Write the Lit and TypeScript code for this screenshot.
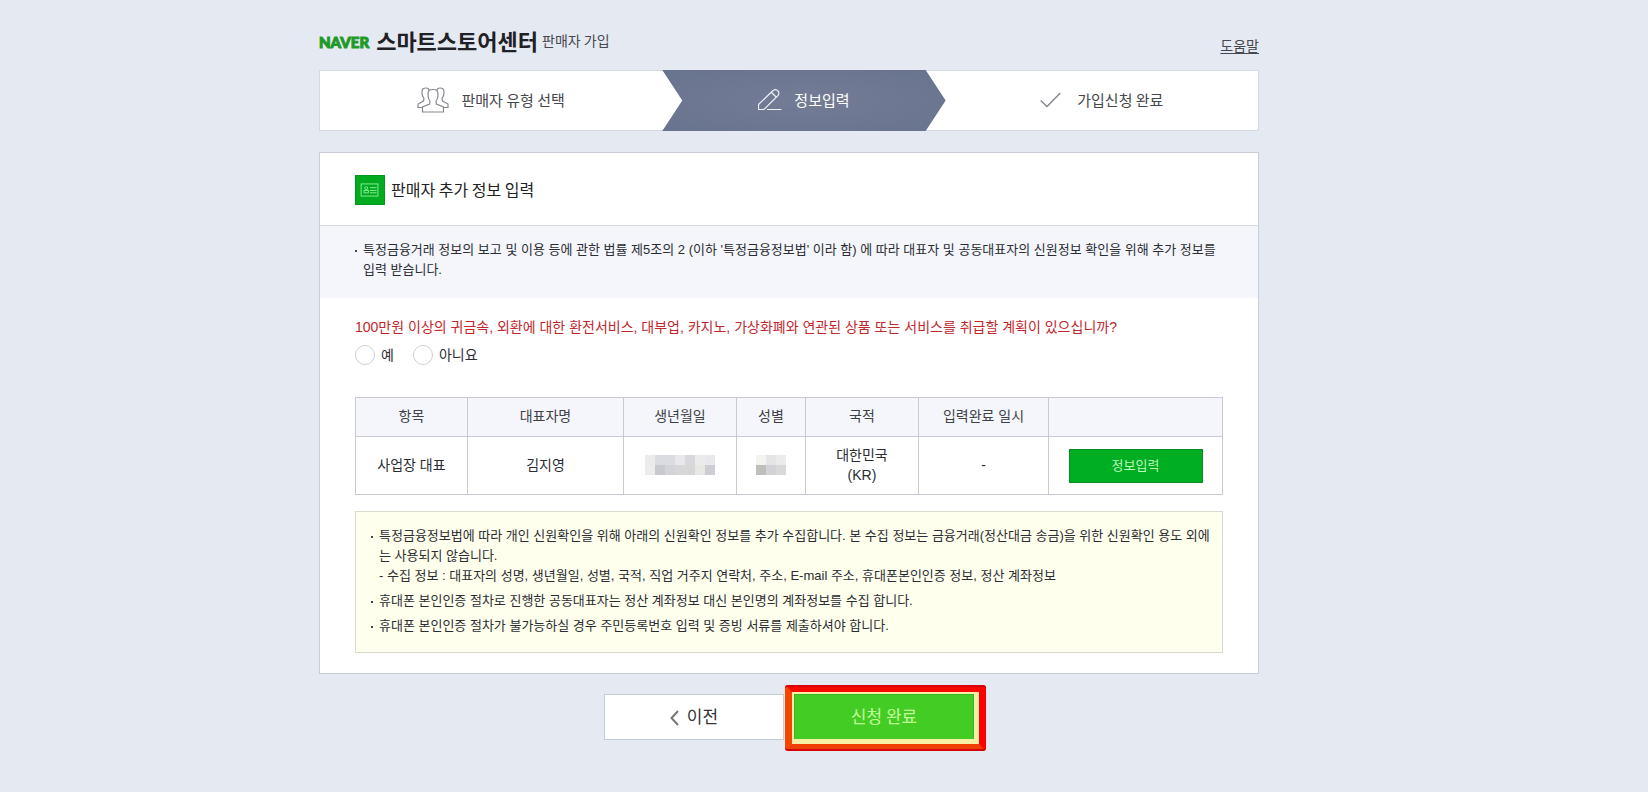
import { LitElement, html, css, svg } from "lit";
import { customElement, state } from "lit/decorators.js";
import { styleMap } from "lit/directives/style-map.js";

const peopleIcon = svg`<svg class="ico people" viewBox="0 0 32 26" width="32" height="26" aria-hidden="true">
  <path d="M12 3.500C11.800 1.800 11 1 9.500 1C6.500 0.800 5 2 5 5C4.800 7 5.500 9.500 7 11.500L6.500 14L1 17V20.500H5.500"/>
  <path d="M20 3.500C20.200 1.800 21 1 22.500 1C25.500 0.800 27 2 27 5C27.200 7 26.500 9.500 25 11.500L25.500 14L31 17V20.500H26.500"/>
  <path d="M16 2.500C12.500 2.300 10.800 4 11 7.500C10.800 10.500 11.500 12.500 13 14.500L12.600 17L5.500 20V25H26.500V20L19.400 17L19 14.500C20.500 12.500 21.200 10.500 21 7.500C21.200 4 19.500 2.300 16 2.500Z"/>
</svg>`;

const pencilIcon = svg`<svg class="ico pencil" viewBox="0 0 24 22" width="24" height="22" aria-hidden="true">
  <path d="M0.500 15.500L14.800 1.800C16.200 0.200 18.200 0.200 19.700 1.700C21.300 3.200 21.300 5.200 19.900 6.600L6 20.500H0.500Z"/>
  <path d="M13.300 3.200L18.400 8.200"/>
  <path d="M9 20.500H23.500"/>
</svg>`;

const checkIcon = svg`<svg class="ico check" viewBox="0 0 21 16" width="21" height="16" aria-hidden="true">
  <path d="M0.700 8.500L7 14.500L20.300 1"/>
</svg>`;

const cardIcon = svg`<svg class="card-ico" viewBox="0 0 30 30" width="30" height="30" aria-hidden="true">
  <rect x="5.500" y="8.500" width="18" height="13"/>
  <circle cx="11" cy="13" r="1.600"/>
  <path d="M8.500 18V15.500H13.500V18Z"/>
  <path d="M15 12.500H22M15 15.500H22M15 18H22"/>
</svg>`;

const birthMask = [
  ["#ebebeb", "#dbdbe3", "#dbdbe3", "#e9e9ed", "#d9d9dd", "#ebebeb", "#e9e9ed"],
  ["#ececec", "#c9c9d1", "#d3d3d9", "#d7d7d7", "#d7d7d7", "#e7e7e3", "#cdcdd3"],
];
const genderMask = [
  ["#f3f3ef", "#e5e5e5", "#ebebeb"],
  ["#bfbfbb", "#d3d3d7", "#d9d9d9"],
];

@customElement("pixel-mask")
class PixelMask extends LitElement {
  static properties = { rows: { attribute: false } };
  declare rows: string[][];
  static styles = css`
    :host { display: inline-block; vertical-align: middle; }
    .row { display: flex; }
    .cell { width: 10px; height: 10px; }
  `;
  render() {
    return html`${this.rows.map(
      (r) => html`<div class="row">${r.map((c) => html`<span class="cell" style=${styleMap({ background: c })}></span>`)}</div>`
    )}`;
  }
}

@customElement("app-root")
class AppRoot extends LitElement {
  @state() private answer = "";

  static styles = css`
    :host {
      display: block;
      min-height: 100vh;
      box-sizing: border-box;
      padding: 24px 70px 40px 0;
      background: #e5e9f1;
      color: #2b2d33;
      font-family: "Liberation Sans", "Noto Sans CJK KR", sans-serif;
      font-size: 13px;
      line-height: 20px;
    }
    * { box-sizing: border-box; }
    .wrap { max-width: 940px; margin: 0 auto; }
    .top { display: flex; justify-content: space-between; align-items: flex-end; height: 34px; padding-bottom: 2px; }
    .brand { display: flex; align-items: center; height: 32px; margin: 0; font-weight: 400; }
    .naver { padding-top: 4px; font: 900 15px/20px Lato, sans-serif; -webkit-text-stroke: 1px #1f9a28; color: #1f9a28; text-decoration: none; }
    .center { margin-left: 7px; font: 700 22px/32px "Noto Sans CJK KR", sans-serif; color: #1f2126; }
    .join { margin-left: 4px; font: 400 14px/32px "Noto Sans CJK KR", sans-serif; color: #45484f; }
    .help { color: #45484f; font-size: 14px; line-height: 20px; text-underline-offset: 2px; }

    .steps {
      display: grid;
      grid-template-columns: 343fr 284fr 313fr;
      height: 61px;
      margin: 12px 0 0;
      padding: 0;
      list-style: none;
      background: #fff;
      border: 1px solid #d3d8e1;
      font: 400 15px/22px "Noto Sans CJK KR", sans-serif;
      color: #45474d;
    }
    .step { display: flex; align-items: center; justify-content: center; gap: 12px; padding-bottom: 2px; }
    .step.on {
      margin: -1px 0;
      color: #fff;
      background: radial-gradient(ellipse at center, #737c95, #68738f);
      clip-path: polygon(0 0, calc(100% - 20px) 0, 100% 50%, calc(100% - 20px) 100%, 0 100%, 20px 50%);
    }
    .step:last-child { gap: 16px; }
    .ico { fill: none; stroke: #85888f; stroke-width: 1.2; }
    .pencil { stroke: #eef0f8; }
    .check { stroke: #85858f; stroke-width: 1.400; }

    .panel { margin-top: 21px; background: #fff; border: 1px solid #c8cdd6; }
    .head { display: flex; align-items: center; gap: 6px; height: 73px; padding: 2px 35px 0; border-bottom: 1px solid #d5d8e0; }
    .card-ico { background: #00ab1f; border: 1px solid #079322; fill: none; stroke: #8df09a; stroke-width: 1; }
    .head h2 { margin: 0; padding-bottom: 3px; font: 400 16px/24px "Noto Sans CJK KR", sans-serif; color: #222; }
    .notice { padding: 14px 35px 18px; background: #f4f6fb; }
    ul.dots { margin: 0; padding: 0; list-style: none; }
    .dots li { display: flex; gap: 6px; }
    .dots li::before { content: ""; flex: none; width: 2px; height: 2px; margin-top: 10px; background: #444; }
    .body { padding: 19px 35px 20px; }
    fieldset { margin: 0; padding: 0; border: 0; }
    legend { padding: 0; font-size: 14px; color: #c0272d; }
    .radios { display: flex; gap: 19px; margin-top: 8px; font-size: 14px; }
    .radio { display: flex; align-items: center; gap: 6px; }
    .radio input {
      appearance: none;
      width: 20px;
      height: 20px;
      margin: 0;
      border: 1px solid #cfcfcf;
      border-radius: 50%;
      background: #fff;
    }
    .radio input:checked { border: 6px solid #00ab1f; }

    table { width: 100%; margin-top: 32px; border-collapse: collapse; table-layout: fixed; text-align: center; font-size: 14px; }
    th, td { padding: 0 0 2px; border: 1px solid #c9c9d3; font-weight: 400; }
    th { height: 39px; background: #f4f6fb; color: #3f4147; }
    td { height: 58px; }
    td:last-child { padding: 0; }
    .fill { width: 134px; height: 34px; padding: 0; border: 1px solid #078a25; background: #00ae22; color: #b9f7bd; font: inherit; font-size: 13px; }

    .memo { margin-top: 16px; padding: 14px 8px 16px 15px; border: 1px solid #d9dbcd; background: #feffec; }
    .memo li + li { margin-top: 5px; }

    .actions { display: flex; justify-content: center; gap: 10px; margin-top: 20px; }
    .btn { display: flex; align-items: center; justify-content: center; gap: 8px; width: 180px; height: 46px; padding: 0 0 2px; font: 400 17px/24px "Noto Sans CJK KR", sans-serif; }
    .prev { border: 1px solid #c3cbd3; background: #fff; color: #333; }
    .prev svg { margin-top: 3px; fill: none; stroke: #777; stroke-width: 2; }
    .done { border: 1px solid #3cb526; background: #42cc24; color: #c5ff9c; }
    .spot { position: relative; }
    .ring {
      position: absolute;
      inset: -9px -12px -11px -9px;
      border: 7px solid;
      border-color: #f80800 #ff0000 #ee3e00 #f34700;
      border-radius: 4px;
      box-shadow: inset 2px 2px #f7f0a4, inset -5px -5px #f7f0a4;
      pointer-events: none;
    }
    .ring::after { content: ""; position: absolute; inset: -7px; border: solid #d80008; border-width: 2px 0; border-radius: 3px; }
  `;

  render() {
    return html`
      <div class="wrap">
        <header class="top">
          <h1 class="brand">
            <a class="naver" href="#">NAVER</a><span class="center">스마트스토어센터</span><span class="join">판매자 가입</span>
          </h1>
          <a class="help" href="#">도움말</a>
        </header>
        <ol class="steps">
          <li class="step">${peopleIcon}<span>판매자 유형 선택</span></li>
          <li class="step on" aria-current="step">${pencilIcon}<span>정보입력</span></li>
          <li class="step">${checkIcon}<span>가입신청 완료</span></li>
        </ol>
        <main class="panel">
          <div class="head">${cardIcon}<h2>판매자 추가 정보 입력</h2></div>
          <div class="notice">
            <ul class="dots">
              <li><span>특정금융거래 정보의 보고 및 이용 등에 관한 법률 제5조의 2 (이하 '특정금융정보법' 이라 함) 에 따라 대표자 및 공동대표자의 신원정보 확인을 위해 추가 정보를 입력 받습니다.</span></li>
            </ul>
          </div>
          <div class="body">
            <fieldset>
              <legend>100만원 이상의 귀금속, 외환에 대한 환전서비스, 대부업, 카지노, 가상화폐와 연관된 상품 또는 서비스를 취급할 계획이 있으십니까?</legend>
              <div class="radios">
                ${[["yes", "예"], ["no", "아니요"]].map(
                  ([v, t]) => html`<label class="radio"><input type="radio" name="plan" value=${v} .checked=${this.answer === v} @change=${() => (this.answer = v)} />${t}</label>`
                )}
              </div>
            </fieldset>
            <table>
              <colgroup>
                ${[112, 156, 113, 69, 113, 130, 174].map((w) => html`<col style=${styleMap({ width: `${(w / 867) * 100}%` })} />`)}
              </colgroup>
              <thead>
                <tr>${["항목", "대표자명", "생년월일", "성별", "국적", "입력완료 일시", ""].map((t) => html`<th scope="col">${t}</th>`)}</tr>
              </thead>
              <tbody>
                <tr>
                  <td>사업장 대표</td>
                  <td>김지영</td>
                  <td><pixel-mask .rows=${birthMask}></pixel-mask></td>
                  <td><pixel-mask .rows=${genderMask}></pixel-mask></td>
                  <td>대한민국<br />(KR)</td>
                  <td>-</td>
                  <td><button class="fill" type="button">정보입력</button></td>
                </tr>
              </tbody>
            </table>
            <div class="memo">
              <ul class="dots">
                <li><span>특정금융정보법에 따라 개인 신원확인을 위해 아래의 신원확인 정보를 추가 수집합니다. 본 수집 정보는 금융거래(정산대금 송금)을 위한 신원확인 용도 외에는 사용되지 않습니다.<br />- 수집 정보 : 대표자의 성명, 생년월일, 성별, 국적, 직업 거주지 연락처, 주소, E-mail 주소, 휴대폰본인인증 정보, 정산 계좌정보</span></li>
                <li><span>휴대폰 본인인증 절차로 진행한 공동대표자는 정산 계좌정보 대신 본인명의 계좌정보를 수집 합니다.</span></li>
                <li><span>휴대폰 본인인증 절차가 불가능하실 경우 주민등록번호 입력 및 증빙 서류를 제출하셔야 합니다.</span></li>
              </ul>
            </div>
          </div>
        </main>
        <div class="actions">
          <button class="btn prev" type="button">
            <svg viewBox="0 0 9 16" width="9" height="16" aria-hidden="true"><path d="M8 1L1.500 8L8 15" /></svg>이전
          </button>
          <div class="spot">
            <span class="ring"></span>
            <button class="btn done" type="button">신청 완료</button>
          </div>
        </div>
      </div>
    `;
  }
}
